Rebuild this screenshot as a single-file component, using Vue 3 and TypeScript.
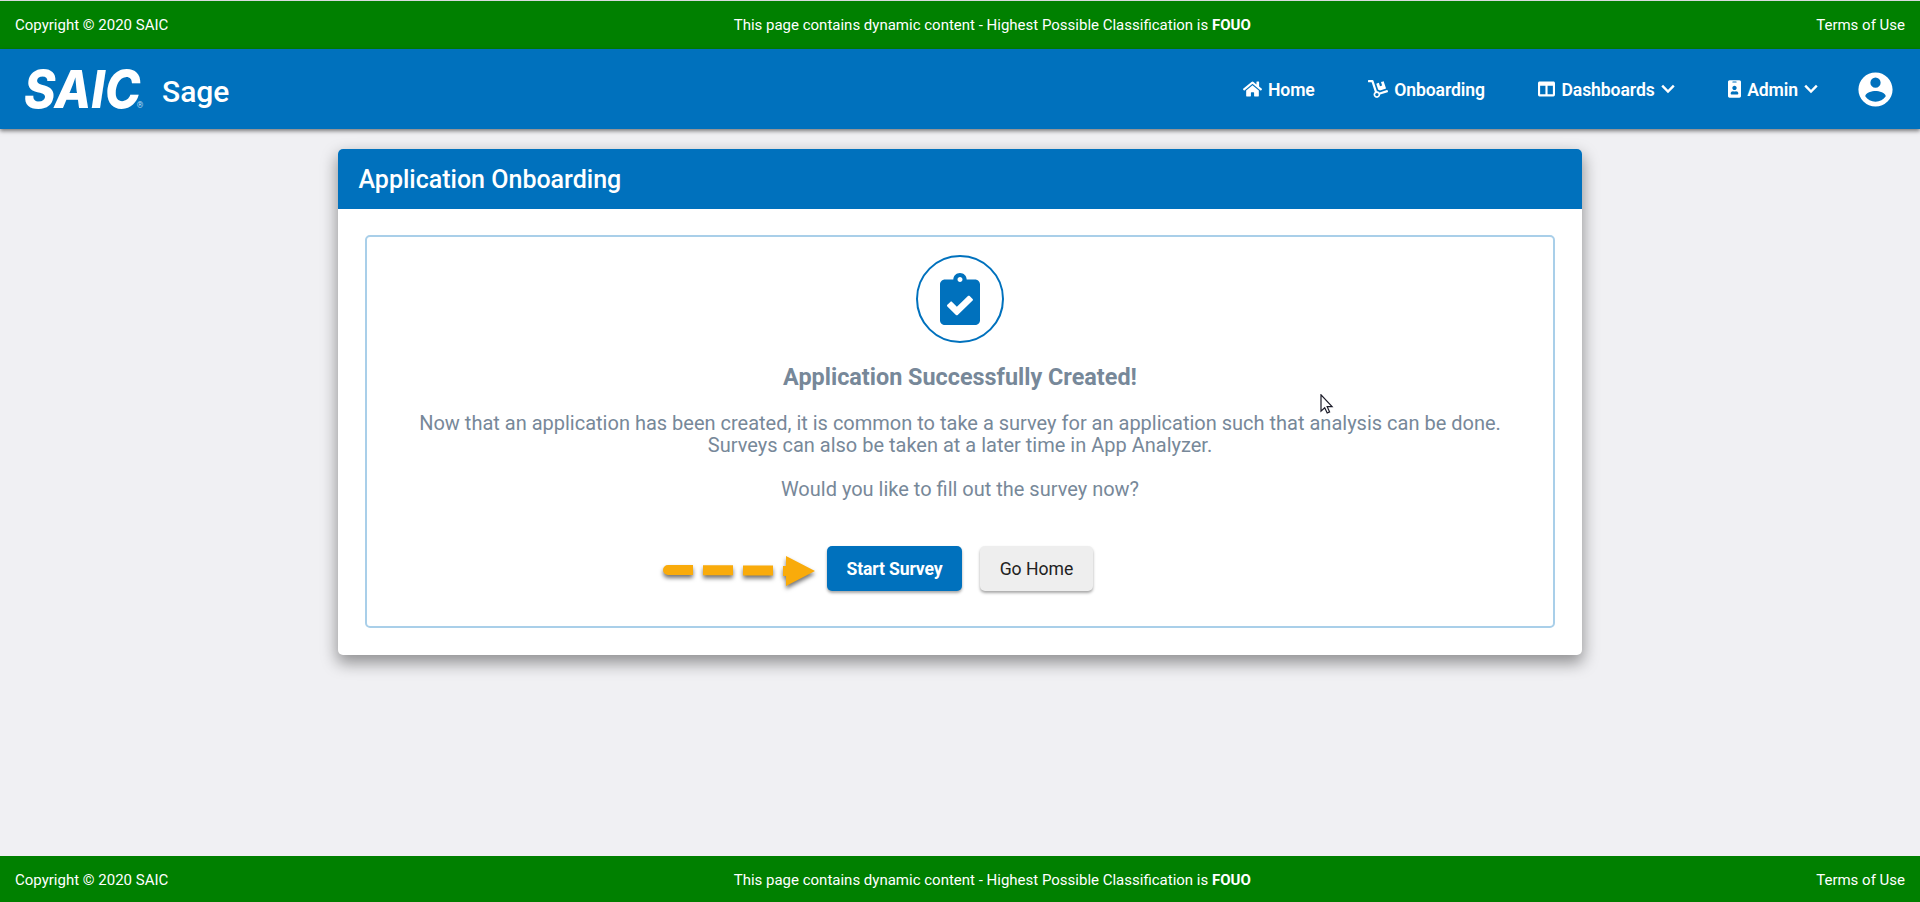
<script setup lang="ts">
interface NavItem {
  label: string
  icon: string
  width: number
  box: string
  menu: boolean
}

const navItems: NavItem[] = [
  {
    label: 'Home',
    width: 19,
    box: '0 0 576 512',
    menu: false,
    icon: 'M280.37 148.26L96 300.11V464a16 16 0 0 0 16 16l112.06-.29a16 16 0 0 0 15.92-16V368a16 16 0 0 1 16-16h64a16 16 0 0 1 16 16v95.64a16 16 0 0 0 16 16.05L464 480a16 16 0 0 0 16-16V300L295.67 148.26a12.19 12.19 0 0 0-15.3 0zM571.6 251.47L488 182.56V44.05a12 12 0 0 0-12-12h-56a12 12 0 0 0-12 12v72.61L318.47 43a48 48 0 0 0-61 0L4.34 251.47a12 12 0 0 0-1.6 16.9l25.5 31A12 12 0 0 0 45.15 301l235.22-193.74a12.19 12.19 0 0 1 15.3 0L530.9 301a12 12 0 0 0 16.9-1.6l25.5-31a12 12 0 0 0-1.7-16.93z',
  },
  {
    label: 'Onboarding',
    width: 20,
    box: '0 0 576 512',
    menu: false,
    icon: 'M294.2 277.7c18 5 34.7 13.4 49.5 24.7l161.5-53.8c8.4-2.8 12.9-11.9 10.1-20.2L454.9 47.2c-2.8-8.4-11.9-12.9-20.2-10.1l-61.1 20.4 33.1 99.4L346 177l-33.1-99.4-61.6 20.5c-8.4 2.8-12.9 11.9-10.1 20.2l53 159.4zm281 48.7L565 296c-2.8-8.4-11.9-12.9-20.2-10.1l-213.5 71.2c-17.2-22-43.6-36.4-73.5-37L158.4 21.9C154 8.8 141.8 0 128 0H16C7.2 0 0 7.2 0 16v32c0 8.8 7.2 16 16 16h88.9l92.2 276.7c-26.1 20.4-41.7 53.6-36 90.5 6.1 39.4 37.9 72.3 77.3 79.2 60.2 10.7 112.3-34.8 113.4-92.6l213.3-71.2c8.3-2.8 12.9-11.8 10.1-20.2zM256 464c-26.5 0-48-21.5-48-48s21.5-48 48-48 48 21.5 48 48-21.5 48-48 48z',
  },
  {
    label: 'Dashboards',
    width: 17,
    box: '0 0 512 512',
    menu: true,
    icon: 'M464 32H48C21.49 32 0 53.49 0 80v352c0 26.51 21.49 48 48 48h416c26.51 0 48-21.49 48-48V80c0-26.51-21.49-48-48-48zM224 416H64V160h160v256zm224 0H288V160h160v256z',
  },
  {
    label: 'Admin',
    width: 13,
    box: '0 0 384 512',
    menu: true,
    icon: 'M336 0H48C21.5 0 0 21.5 0 48v416c0 26.5 21.5 48 48 48h288c26.5 0 48-21.5 48-48V48c0-26.5-21.5-48-48-48zM144 32h96c8.8 0 16 7.2 16 16s-7.2 16-16 16h-96c-8.8 0-16-7.2-16-16s7.2-16 16-16zm48 128c35.3 0 64 28.7 64 64s-28.7 64-64 64-64-28.7-64-64 28.7-64 64-64zm112 236.8c0 10.6-10 19.2-22.4 19.2H102.4C90 416 80 407.4 80 396.8v-19.2c0-31.8 30.1-57.6 67.2-57.6h5c12.3 5.1 25.7 8 39.8 8s27.6-2.9 39.8-8h5c37.1 0 67.2 25.8 67.2 57.6v19.2z',
  },
]
</script>

<template>
  <div class="page">
    <div class="banner banner-top">
      <span>Copyright © 2020 SAIC</span>
      <span>This page contains dynamic content - Highest Possible Classification is <b>FOUO</b></span>
      <span>Terms of Use</span>
    </div>

    <header class="toolbar">
      <svg class="logo" width="120" height="44" viewBox="0 0 120 44">
        <g transform="translate(0 41) scale(0.92 1)">
          <text class="logo-word" x="0" y="0">SAIC<tspan class="logo-mark" x="122.5" y="0">®</tspan></text>
        </g>
      </svg>
      <span class="brand">Sage</span>
      <nav class="nav">
        <a v-for="item in navItems" :key="item.label" class="nav-item">
          <svg :width="item.width" height="18" :viewBox="item.box"><path :d="item.icon" /></svg>
          <span class="nav-label">{{ item.label }}</span>
          <svg v-if="item.menu" class="chevron" width="14" height="10" viewBox="0 0 14 10">
            <path d="M1.2 1.6 7 7.6 12.8 1.6" />
          </svg>
        </a>
      </nav>
      <svg class="avatar" width="41" height="41" viewBox="0 0 24 24">
        <path d="M12,19.2C9.5,19.2 7.29,17.92 6,16C6.03,14 10,12.9 12,12.9C14,12.9 17.97,14 18,16C16.71,17.92 14.5,19.2 12,19.2M12,5A3,3 0 0,1 15,8A3,3 0 0,1 12,11A3,3 0 0,1 9,8A3,3 0 0,1 12,5M12,2A10,10 0 0,0 2,12A10,10 0 0,0 12,22A10,10 0 0,0 22,12C22,6.47 17.5,2 12,2Z" />
      </svg>
    </header>

    <main class="content">
      <section class="card">
        <h1 class="card-title">Application Onboarding</h1>
        <div class="panel">
          <div class="badge">
            <svg width="40" height="52" viewBox="0 0 384 512" preserveAspectRatio="none">
              <path d="M336 64h-80c0-35.3-28.7-64-64-64s-64 28.7-64 64H48C21.5 64 0 85.5 0 112v352c0 26.5 21.5 48 48 48h288c26.5 0 48-21.5 48-48V112c0-26.5-21.5-48-48-48zM192 40c13.3 0 24 10.7 24 24s-10.7 24-24 24-24-10.7-24-24 10.7-24 24-24zm121.2 231.8l-143 141.8c-4.7 4.7-12.3 4.6-17-.1l-82.6-83.3c-4.7-4.7-4.6-12.3.1-17L99.1 285c4.7-4.7 12.3-4.6 17 .1l46 46.4 106-105.2c4.7-4.7 12.3-4.6 17 .1l28.2 28.4c4.7 4.8 4.6 12.3-.1 17z" />
            </svg>
          </div>
          <h2 class="heading">Application Successfully Created!</h2>
          <p class="text">
            Now that an application has been created, it is common to take a survey for an application such that analysis can be done.<br />
            Surveys can also be taken at a later time in App Analyzer.<br /><br />
            Would you like to fill out the survey now?
          </p>
          <div class="actions">
            <button class="btn primary">Start Survey</button>
            <button class="btn">Go Home</button>
            <svg class="arrow" width="170" height="50" viewBox="0 0 170 50">
              <path d="M12 9h25v10h-25a5 5 0 0 1 0-10zM47 9.2h30v10h-30zM87 9.6h30v10h-30zM127 10h3v-10l29 15-29 15v-10h-3z" />
            </svg>
          </div>
          <svg class="cursor" width="14" height="21" viewBox="0 0 14 21">
            <path d="M1 .8v16.4l3.7-3.5 2.5 5.3 2.4-1.1-2.4-5.2h4.9z" />
          </svg>
        </div>
      </section>
    </main>

    <div class="banner">
      <span>Copyright © 2020 SAIC</span>
      <span>This page contains dynamic content - Highest Possible Classification is <b>FOUO</b></span>
      <span>Terms of Use</span>
    </div>
  </div>
</template>

<style>
body {
  margin: 0;
}
</style>

<style scoped>
.page {
  display: flex;
  flex-direction: column;
  box-sizing: border-box;
  height: 902px;
  border-top: 1px solid #d8dadd;
  background: #f0f0f3;
  font-family: Roboto, sans-serif;
}
.banner {
  display: flex;
  justify-content: space-between;
  box-sizing: border-box;
  height: 46px;
  padding: 0 15px;
  background: #008000;
  color: #fff;
  font-size: 15px;
  line-height: 49px;
  white-space: nowrap;
}
.banner-top {
  height: 48px;
}
.toolbar {
  display: flex;
  align-items: center;
  box-sizing: border-box;
  height: 80px;
  padding: 0 24px;
  background: #0071bd;
  color: #fff;
  box-shadow: 0 2px 4px rgba(0, 0, 0, 0.5);
}
.logo {
  overflow: visible;
}
.logo-word {
  fill: #fff;
  font: italic 800 52px Inter, Roboto, sans-serif;
}
.logo-mark {
  fill: #b8d8ef;
  font: 9px Roboto, sans-serif;
}
.brand {
  margin: 4px 0 0 18px;
  font-size: 30px;
  font-weight: 500;
}
.nav {
  display: flex;
  gap: 53.5px;
  margin-left: auto;
}
.nav-item {
  display: flex;
  align-items: center;
  gap: 6px;
  font-size: 17.6px;
  font-weight: 600;
  letter-spacing: -0.1px;
}
.nav-label {
  padding-top: 2px;
}
.nav-item svg,
.avatar {
  fill: #fff;
}
.nav-item .chevron {
  fill: none;
  stroke: #fff;
  stroke-width: 2.4;
}
.avatar {
  margin-left: 37px;
}
.content {
  flex: 1;
  padding-top: 20px;
}
.card {
  box-sizing: border-box;
  width: 1244px;
  height: 506px;
  margin: 0 auto;
  border-radius: 5px;
  background: #fff;
  box-shadow: 0 7px 16px 1px rgba(0, 0, 0, 0.4);
}
.card-title {
  margin: 0;
  padding: 0 20.5px;
  height: 60px;
  border-radius: 5px 5px 0 0;
  background: #0071bd;
  color: #fff;
  font-size: 25px;
  font-weight: 500;
  line-height: 61px;
}
.panel {
  position: relative;
  display: flex;
  flex-direction: column;
  align-items: center;
  box-sizing: border-box;
  height: 393px;
  margin: 26px 27px 0;
  padding-top: 18px;
  border: 2px solid #a9cfe9;
  border-radius: 5px;
  color: #778899;
}
.badge {
  display: flex;
  align-items: center;
  justify-content: center;
  box-sizing: border-box;
  width: 88px;
  height: 88px;
  border: 2px solid #0071bd;
  border-radius: 50%;
}
.badge svg {
  fill: #0071bd;
}
.heading {
  margin: 20px 0 0;
  font-size: 23.4px;
  font-weight: 700;
  line-height: 28px;
}
.text {
  margin: 21px 0 0;
  font-size: 20px;
  line-height: 22px;
  text-align: center;
  white-space: nowrap;
}
.actions {
  position: relative;
  display: flex;
  gap: 18px;
  margin-top: 46px;
}
.btn {
  width: 113px;
  height: 45px;
  padding: 0;
  border: 0;
  border-radius: 5px;
  background: #eee;
  color: #222;
  font: 400 17.6px Roboto, sans-serif;
  box-shadow: 0 2px 3px rgba(0, 0, 0, 0.35);
}
.btn.primary {
  width: 135px;
  background: #0071bd;
  color: #fff;
  font-weight: 700;
  letter-spacing: -0.15px;
}
/* callout pointing at the primary button */
.arrow {
  position: absolute;
  left: -171px;
  top: 10px;
  fill: #f9ab0b;
  filter: drop-shadow(0 3px 2px rgba(0, 0, 0, 0.55));
}
.cursor {
  position: absolute;
  left: 953px;
  top: 157px;
  fill: #fff;
  stroke: #1b1b28;
  stroke-width: 1.2;
}
</style>
